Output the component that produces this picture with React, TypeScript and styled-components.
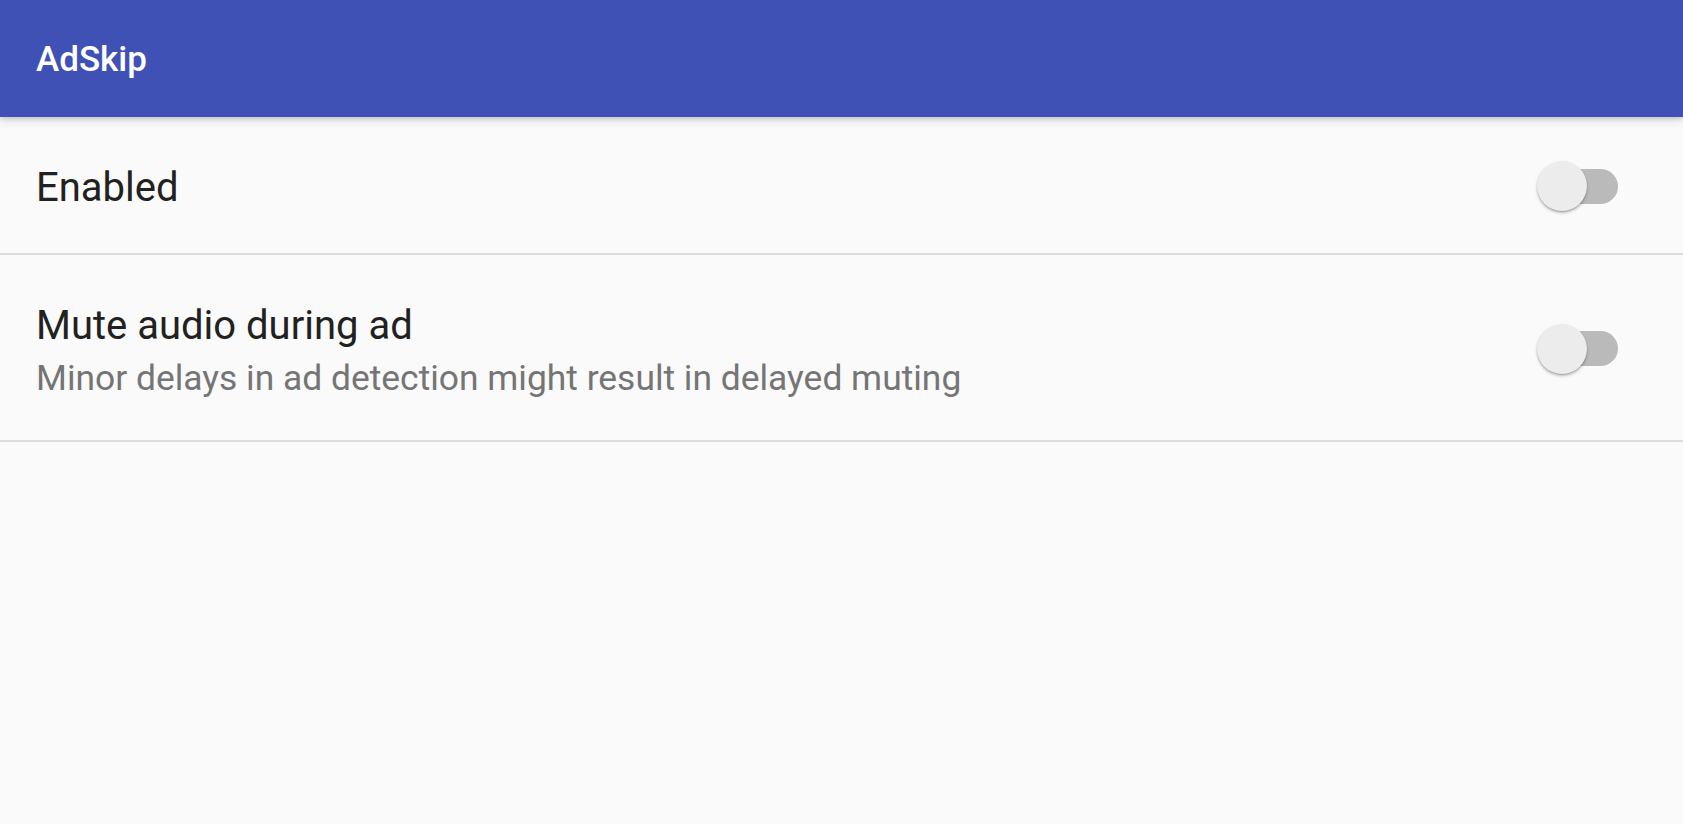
import React, { useState } from 'react'
import styled, { createGlobalStyle } from 'styled-components'

const GlobalStyle = createGlobalStyle`
  html, body {
    margin: 0;
    padding: 0;
    background: #fafafa;
    font-family: Roboto, 'Noto Sans', sans-serif;
  }
`

const Screen = styled.div`
  display: flex;
  flex-direction: column;
  min-height: 824px;
  background: #fafafa;
`

const AppBar = styled.header`
  position: relative;
  z-index: 1;
  display: flex;
  align-items: center;
  height: 117px;
  padding-left: 36px;
  background: #3f51b5;
  box-shadow: 0 2px 4px rgba(0, 0, 0, 0.14), 0 4px 10px rgba(0, 0, 0, 0.1);
`

const AppTitle = styled.h1`
  margin: 2px 0 0;
  color: #ffffff;
  font-size: 35px;
  line-height: 40px;
  font-weight: 500;
`

const PrefRow = styled.div<{ $height: number; $top: number }>`
  display: flex;
  align-items: center;
  box-sizing: border-box;
  height: ${({ $height }) => $height}px;
  padding: ${({ $top }) => $top}px 65px 0 36px;
  border-bottom: 2px solid #dcdcdc;
`

const PrefText = styled.div`
  flex: 1;
  display: flex;
  flex-direction: column;
`

const PrefTitle = styled.div`
  color: #212121;
  font-size: 40px;
  line-height: 48px;
`

const PrefSummary = styled.div`
  margin-top: 6px;
  color: #757575;
  font-size: 35.4px;
  line-height: 44px;
`

const SwitchTrack = styled.button<{ $on: boolean }>`
  position: relative;
  flex: none;
  width: 74px;
  height: 35px;
  margin-top: -4px;
  padding: 0;
  border: none;
  border-radius: 18px;
  background: ${({ $on }) => ($on ? '#9fa8da' : '#bababa')};
  cursor: pointer;
`

const SwitchThumb = styled.span<{ $on: boolean }>`
  position: absolute;
  top: -7.5px;
  left: ${({ $on }) => ($on ? '49px' : '-7px')};
  width: 50px;
  height: 50px;
  border-radius: 50%;
  background: ${({ $on }) => ($on ? '#3f51b5' : '#ececec')};
  box-shadow: 0 2px 3px rgba(0, 0, 0, 0.25), 0 1px 1px rgba(0, 0, 0, 0.12);
  transition: left 0.15s;
`

const Switch: React.FC<{ on: boolean; onToggle: () => void }> = ({ on, onToggle }) => (
  <SwitchTrack $on={on} onClick={onToggle} aria-pressed={on}>
    <SwitchThumb $on={on} />
  </SwitchTrack>
)

export default function App() {
  const [enabled, setEnabled] = useState(false)
  const [mute, setMute] = useState(false)

  return (
    <>
      <GlobalStyle />
      <Screen>
        <AppBar>
          <AppTitle>AdSkip</AppTitle>
        </AppBar>
        <PrefRow $height={138} $top={6}>
          <PrefText>
            <PrefTitle>Enabled</PrefTitle>
          </PrefText>
          <Switch on={enabled} onToggle={() => setEnabled(!enabled)} />
        </PrefRow>
        <PrefRow $height={187} $top={6}>
          <PrefText>
            <PrefTitle>Mute audio during ad</PrefTitle>
            <PrefSummary>Minor delays in ad detection might result in delayed muting</PrefSummary>
          </PrefText>
          <Switch on={mute} onToggle={() => setMute(!mute)} />
        </PrefRow>
      </Screen>
    </>
  )
}
